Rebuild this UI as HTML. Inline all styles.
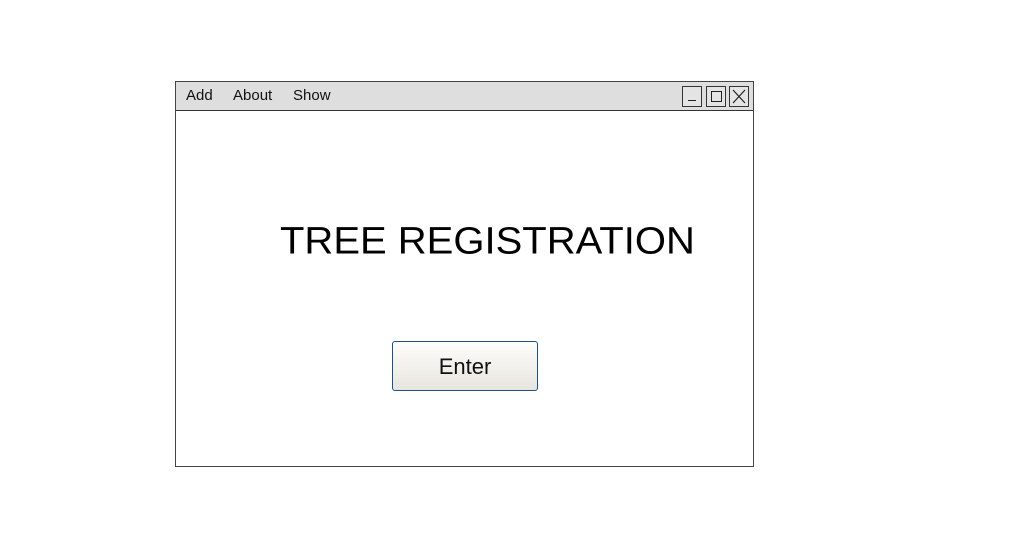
<!DOCTYPE html>
<html><head><style>
body{margin:0;width:1028px;height:559px;background:#fff;position:relative;overflow:hidden;font-family:"Liberation Sans",sans-serif}
.win{position:absolute;left:175px;top:81px;width:577px;height:384px;border:1px solid #444;background:#fff}
.bar{position:absolute;left:0;top:0;width:577px;height:28px;background:#dedede;border-bottom:1px solid #333}
.m{position:absolute;top:5px;font-size:15px;color:#111}
.b{position:absolute;top:4px;width:18px;height:19px;border:1px solid #333;background:#e4e4e4}
.t{position:absolute;left:104px;top:138px;font-size:40px;color:#000;white-space:nowrap;transform:scaleY(0.95);transform-origin:left top}
.btn{position:absolute;left:216px;top:259px;width:144px;height:48px;border:1px solid #1f4f8a;border-radius:3px;background:linear-gradient(#fdfdfb,#e7e5de);font-size:22px;text-align:center;line-height:50px;color:#111}
</style></head><body>
<div class="win">
<div class="bar">
<span class="m" style="left:10px">Add</span>
<span class="m" style="left:57px">About</span>
<span class="m" style="left:117px">Show</span>
<div class="b" style="left:506px"><div style="position:absolute;left:5px;top:13px;width:8px;height:1px;background:#222"></div></div>
<div class="b" style="left:530px"><div style="position:absolute;left:4px;top:4px;width:9px;height:9px;border:1px solid #222"></div></div>
<div class="b" style="left:553px"><svg width="18" height="19" style="position:absolute;left:0;top:0"><path d="M3 3L15 16M15 3L3 16" stroke="#222" stroke-width="1.2"/></svg></div>
</div>
<div class="t">TREE REGISTRATION</div>
<div class="btn">Enter</div>
</div>
</body></html>
